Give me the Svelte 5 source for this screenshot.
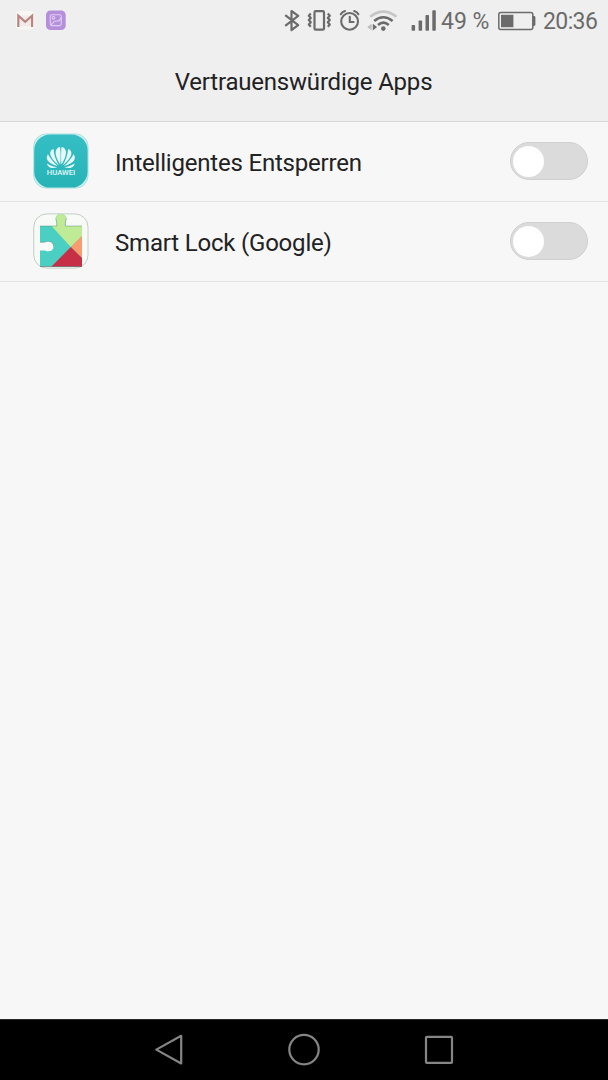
<script>
  let apps = $state([
    { id: 'huawei', name: 'Intelligentes Entsperren', on: false },
    { id: 'play', name: 'Smart Lock (Google)', on: false }
  ]);
  const petals = [
    'M60.2 164.6C57.6 160.4 55 155.300 55.800 151C56.300 148.400 58 147.100 60.100 146.900C60.700 153 60.700 159 60.200 164.600Z',
    'M58.900 165.500C54.600 161.700 50.200 157 50.200 153.200C50.200 151 51.600 149.400 53.500 149C53.800 154.700 56 160.200 58.900 165.500Z',
    'M57.900 166.300C52.700 164.700 47.700 162.400 46.900 158.800C46.500 157 47 155.500 48 154.300C50.300 158.700 53.800 162.800 57.900 166.300Z',
    'M57.300 167.200C53.500 168.500 50 168.400 48.100 166C47.400 165.100 47 164.200 46.900 163.400C50 165.300 53.600 166.700 57.300 167.200Z'
  ];
</script>

<div class="screen">
  <header>
    <div class="status">
      <div class="notes">
        <svg width="20" height="22" viewBox="15 10 20 22">
          <rect x="16" y="11" width="18.500" height="18.500" rx="4" fill="#f9f7f6" />
          <path d="M18.500 15.500H32V26.500H18.500Z" fill="#f0eae9" />
          <path d="M18.300 27V15.600L25.200 21.800L32.100 15.600V27" fill="none" stroke="#b98581" stroke-width="2.200" />
        </svg>
        <svg width="20" height="22" viewBox="46 10 20 22">
          <rect x="46" y="10.500" width="19.700" height="19.500" rx="4.500" fill="#b58fdb" />
          <g fill="none" stroke="#e0cdf2" stroke-width="1.100">
            <rect x="50.300" y="14.800" width="11" height="10.800" rx="1.500" />
            <circle cx="53.500" cy="17.800" r="1.300" />
            <path d="M51 25Q54 20.500 57 21T61 17.500" />
          </g>
        </svg>
      </div>
      <div class="system">
        <svg class="bt" width="17" height="26" viewBox="283 8 17 26">
          <path d="M285.200 15.200L298.200 25.200L291.500 30V11L298.200 15.900L285.200 25.800" fill="none" stroke="#6b6b6b" stroke-width="2.200" stroke-linejoin="round" />
        </svg>
        <svg class="vib" width="26" height="26" viewBox="306 8 26 26">
          <g fill="none" stroke="#6b6b6b" stroke-width="2.200" stroke-linejoin="round">
            <rect x="314.500" y="11.200" width="9.500" height="18.400" rx="1.200" />
            <path d="M310.800 13.500L308.800 15.700L310.800 17.900L308.800 20.100L310.800 22.300L308.800 24.500L310.800 26.800M327.800 13.500L329.800 15.700L327.800 17.900L329.800 20.100L327.800 22.300L329.800 24.500L327.800 26.800" />
          </g>
        </svg>
        <svg class="alarm" width="24" height="26" viewBox="338 8 24 26">
          <g fill="none" stroke="#6b6b6b" stroke-width="2.100" stroke-linecap="round">
            <circle cx="349.600" cy="21.400" r="8.400" />
            <path d="M349.800 16.700V22H353.600M340.800 14.200Q342 11.800 345 11M354.200 11Q357.200 11.800 358.400 14.200" />
          </g>
        </svg>
        <svg class="wifi" width="34" height="26" viewBox="366 8 34 26">
          <g fill="none" stroke-width="2.600">
            <path d="M370.200 16.800Q383.300 6.500 396.500 16.800" stroke="#c6c6c6" />
            <path d="M374.200 21Q383.300 13.500 392.600 21" stroke="#6b6b6b" />
            <path d="M378 25Q383.300 20.400 388.800 25" stroke="#6b6b6b" />
          </g>
          <circle cx="383.300" cy="28.600" r="2.300" fill="#6b6b6b" />
          <path d="M371.600 23.800V30.400L367.300 27.100Z" fill="#bdbdbd" />
          <path d="M372.800 23.800V30.400L377.100 27.100Z" fill="#6b6b6b" />
        </svg>
        <svg class="signal" width="26" height="26" viewBox="411 8 26 26">
          <g fill="#6b6b6b">
            <rect x="411.600" y="25" width="3.500" height="5.800" rx=".8" />
            <rect x="418.600" y="20.400" width="3.500" height="10.400" rx=".8" />
            <rect x="425.500" y="15.100" width="3.500" height="15.700" rx=".8" />
            <rect x="432.300" y="10.300" width="3.500" height="20.500" rx=".8" />
          </g>
        </svg>
        <span class="pct">49 %</span>
        <svg class="batt" width="40" height="26" viewBox="497 8 40 26">
          <rect x="498.800" y="12.500" width="34" height="17" rx="2" fill="none" stroke="#6b6b6b" stroke-width="1.500" />
          <rect x="501" y="14.800" width="12.400" height="12.400" fill="#6b6b6b" />
          <path d="M533 16H534Q535.400 16 535.400 17.400V24.600Q535.400 26 534 26H533Z" fill="#6b6b6b" />
        </svg>
        <span class="time">20:36</span>
      </div>
    </div>
    <h1>Vertrauenswürdige Apps</h1>
  </header>

  <main>
    {#each apps as app (app.id)}
      <div class="row">
        {#if app.id === 'huawei'}
          <svg class="icon" width="56" height="56" viewBox="33 133 56 56">
            <defs>
              <linearGradient id="teal" x1="0" y1="0" x2="0" y2="1">
                <stop offset="0" stop-color="#35bfc5" /><stop offset="1" stop-color="#27b3b6" />
              </linearGradient>
            </defs>
            <rect x="33.700" y="133.900" width="54.400" height="54.200" rx="12.500" fill="#c9f1f0" stroke="#a5d9d8" stroke-width=".8" />
            <rect x="34.200" y="134.400" width="53.400" height="53.200" rx="16" fill="url(#teal)" />
            <g fill="#e6f9f8">
              {#each petals as d}<path {d} />{/each}
              <g transform="translate(121.600 0) scale(-1 1)">
                {#each petals as d}<path {d} />{/each}
              </g>
            </g>
            <text x="46.800" y="175.200" textLength="28.400" lengthAdjust="spacingAndGlyphs">HUAWEI</text>
          </svg>
        {:else}
          <svg class="icon" width="56" height="56" viewBox="33 213 56 56">
            <defs>
              <clipPath id="piece">
                <path d="M40 226H56.800V223C56.800 221.500 55.700 220.500 55.900 218C56.200 215.200 58 213.900 61 213.900S65.900 215.200 66.200 218C66.400 220.500 65.300 221.500 65.300 223V226H82V266.500H40V250.500H44C45.500 250.500 46.500 251.500 49 251.200C52 250.800 53.500 249 53.500 246.200S52 241.800 49 241.400C46.500 241.100 45.500 242.300 44 242.300H40Z" />
              </clipPath>
            </defs>
            <rect x="33.800" y="213.900" width="54.200" height="54.200" rx="13" fill="#f7faf7" stroke="#bdc8bd" stroke-width=".9" />
            <g clip-path="url(#piece)">
              <path d="M40 213H83V267H40Z" fill="#4bcfc3" />
              <path d="M51.500 226V213H83V235L70.800 247Z" fill="#bfeb96" />
              <path d="M83 234.700L70.800 247L83 259Z" fill="#f89c70" />
              <path d="M70.800 247L83 259V268H50Z" fill="#c62f45" />
            </g>
            <path d="M40 226H56.800V223C56.800 221.500 55.700 220.500 55.900 218M66.200 218C66.400 220.500 65.300 221.500 65.300 223V226H82M40 242.300H44C45.500 242.300 46.500 241.100 49 241.400C52 241.800 53.500 243.400 53.500 246.200" fill="none" stroke="#477c68" stroke-opacity=".6" stroke-width=".7" />
            <path d="M40 266.500H82" stroke="#4f4b50" stroke-opacity=".6" stroke-width=".8" />
          </svg>
        {/if}
        <span class="name">{app.name}</span>
        <button class="toggle" class:on={app.on} aria-label={app.name} aria-pressed={app.on} onclick={() => (app.on = !app.on)}>
          <span class="knob"></span>
        </button>
      </div>
    {/each}
  </main>

  <nav>
    <svg width="30" height="36" viewBox="154 1032 30 36">
      <path d="M181.200 1035.800V1063.500L156.300 1049.600Z" />
    </svg>
    <svg width="34" height="36" viewBox="287 1032 34 36">
      <circle cx="304" cy="1049.600" r="14.700" />
    </svg>
    <svg width="30" height="36" viewBox="424 1032 30 36">
      <rect x="426" y="1036.800" width="26" height="26" rx=".8" />
    </svg>
  </nav>
</div>

<style>
  :global(body) { margin: 0; background: #f7f7f7; }
  .screen {
    width: 608px; height: 1080px; display: flex; flex-direction: column;
    background: #f7f7f7; color: #222; font-family: Roboto, sans-serif;
  }
  svg { display: block; flex: none; }
  header { height: 121px; background: #efefef; border-bottom: 1px solid #d7d7d7; }
  .status { height: 42px; display: flex; justify-content: space-between; color: #6b6b6b; }
  .notes { display: flex; gap: 11px; padding: 10px 0 0 15px; }
  .system { display: flex; padding-top: 8px; width: 325px; font-size: 23px; line-height: 28px; white-space: nowrap; }
  .vib { margin-left: 6px; }
  .alarm { margin-left: 6px; }
  .wifi { margin-left: 4px; }
  .signal { margin-left: 11px; }
  .pct { width: 56px; margin-left: 4px; }
  .time { margin-left: 6px; letter-spacing: -.6px; }
  h1 { margin: 0; padding-right: 1px; height: 79px; line-height: 80px; text-align: center; font-size: 24px; font-weight: 400; letter-spacing: -.2px; }
  main { flex: 1; }
  .row {
    height: 79px; display: flex; align-items: center; box-sizing: content-box;
    border-bottom: 1px solid #e2e2e2; padding: 0 20px 0 33px;
  }
  .icon { margin-top: -1px; }
  .icon text { font: 500 7.200px Roboto, sans-serif; fill: #e4f8f8; }
  .name { flex: 1; margin-left: 26px; font-size: 24px; line-height: 30px; padding-top: 2px; letter-spacing: -.2px; }
  .toggle {
    width: 78px; height: 38px; margin: 0 0 1px; padding: 2px; box-sizing: border-box; display: flex;
    align-items: center; border: 1px solid #d0d0d0; border-radius: 20px; background: #dbdbdb;
  }
  .toggle.on { justify-content: flex-end; background: #35bfc5; }
  .knob { width: 31px; height: 31px; border-radius: 50%; background: #fff; }
  nav {
    height: 48px; background: #000; border-top: 1px solid #292929; display: flex;
    justify-content: space-between; padding: 12px 154px 0; box-sizing: content-box;
  }
  nav svg { fill: none; stroke: #858585; stroke-width: 2.200; stroke-linejoin: round; }
</style>
